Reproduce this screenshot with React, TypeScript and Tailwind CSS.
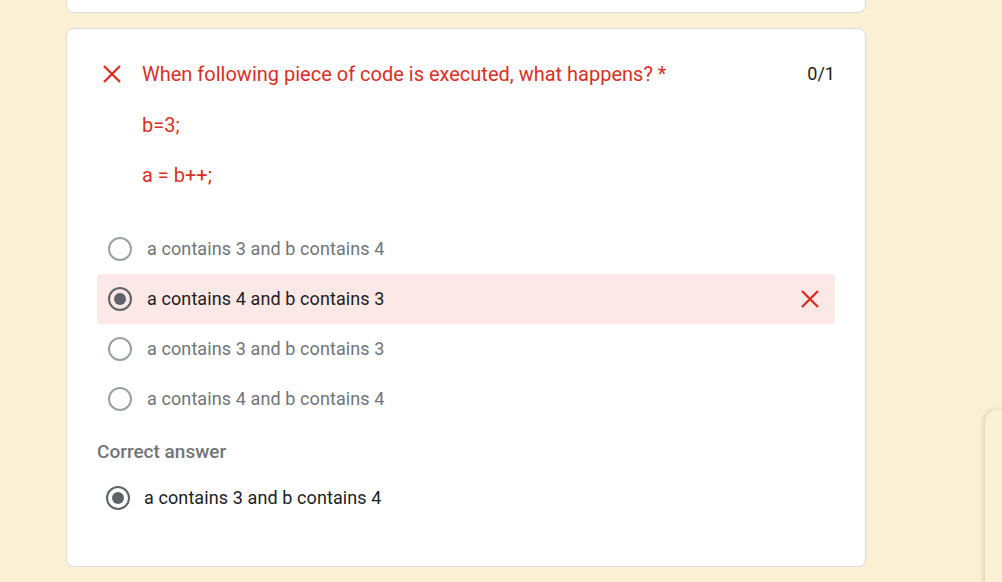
import React from "react";

const XIcon = ({ size = 18 }: { size?: number }) => (
  <svg width={size} height={size} viewBox="0 0 18 18" fill="none">
    <path d="M1 1L17 17M17 1L1 17" stroke="#d93025" strokeWidth="2.4" strokeLinecap="butt" />
  </svg>
);

const Radio = ({ checked }: { checked?: boolean }) => (
  <div
    className={`w-[24px] h-[24px] rounded-full border-2 flex items-center justify-center shrink-0 ${
      checked ? "border-[#5f6368]" : "border-[#9aa0a6]"
    }`}
  >
    {checked && <div className="w-[12px] h-[12px] rounded-full bg-[#5f6368]" />}
  </div>
);

const Option = ({
  text,
  checked,
  wrong,
}: {
  text: string;
  checked?: boolean;
  wrong?: boolean;
}) => (
  <div
    className={`h-[50px] flex items-center pl-[11px] pr-[16px] rounded-[4px] ${
      wrong ? "bg-[#fce8e6]" : ""
    }`}
  >
    <Radio checked={checked} />
    <span
      className={`ml-[15px] text-[18px] leading-[24px] tracking-[0.1px] ${
        checked ? "text-[#202124]" : "text-[#70757a]"
      }`}
    >
      {text}
    </span>
    {wrong && (
      <div className="ml-auto mr-[0px]">
        <XIcon size={18} />
      </div>
    )}
  </div>
);

export default function App() {
  return (
    <div
      className="relative w-[1002px] h-[582px] overflow-hidden bg-[#fbf0d3]"
      style={{ fontFamily: "Roboto, 'Liberation Sans', sans-serif" }}
    >
      <div className="ml-[66px] w-[800px]">
        <div className="h-[13px] bg-white border border-t-0 border-[#dadce0] rounded-b-[8px]" />
        <div className="mt-[15px] bg-white border border-[#dadce0] rounded-[8px] px-[30px] pt-[33px] pb-[43px]">
          <div className="flex items-center h-[24px]">
            <div className="ml-[6px] w-[18px] flex items-center">
              <XIcon size={18} />
            </div>
            <div className="ml-[21px] text-[20px] leading-[24px] text-[#d93025]">
              When following piece of code is executed, what happens? *
            </div>
            <div className="ml-auto text-[18px] leading-[24px] text-[#202124]">0/1</div>
          </div>
          <div className="mt-[14px] pl-[45px] text-[20px] text-[#d93025]">
            <div className="h-[50px] flex items-center">b=3;</div>
            <div className="h-[50px] flex items-center">a = b++;</div>
          </div>
          <div className="mt-[24px]">
            <Option text="a contains 3 and b contains 4" />
            <Option text="a contains 4 and b contains 3" checked wrong />
            <Option text="a contains 3 and b contains 3" />
            <Option text="a contains 4 and b contains 4" />
          </div>
          <div className="mt-[16px] h-[24px] flex items-center text-[19px] font-medium text-[#70757a]">
            Correct answer
          </div>
          <div className="mt-[9px] h-[50px] flex items-center pl-[9px]">
            <Radio checked />
            <span className="ml-[14px] text-[18px] leading-[24px] tracking-[0.1px] text-[#202124]">
              a contains 3 and b contains 4
            </span>
          </div>
        </div>
      </div>
      <div className="absolute left-[985px] top-[410px] w-[60px] h-[200px] bg-[#fcf1d6] rounded-tl-[12px] shadow-[-2px_0_4px_rgba(0,0,0,0.12)]" />
    </div>
  );
}
